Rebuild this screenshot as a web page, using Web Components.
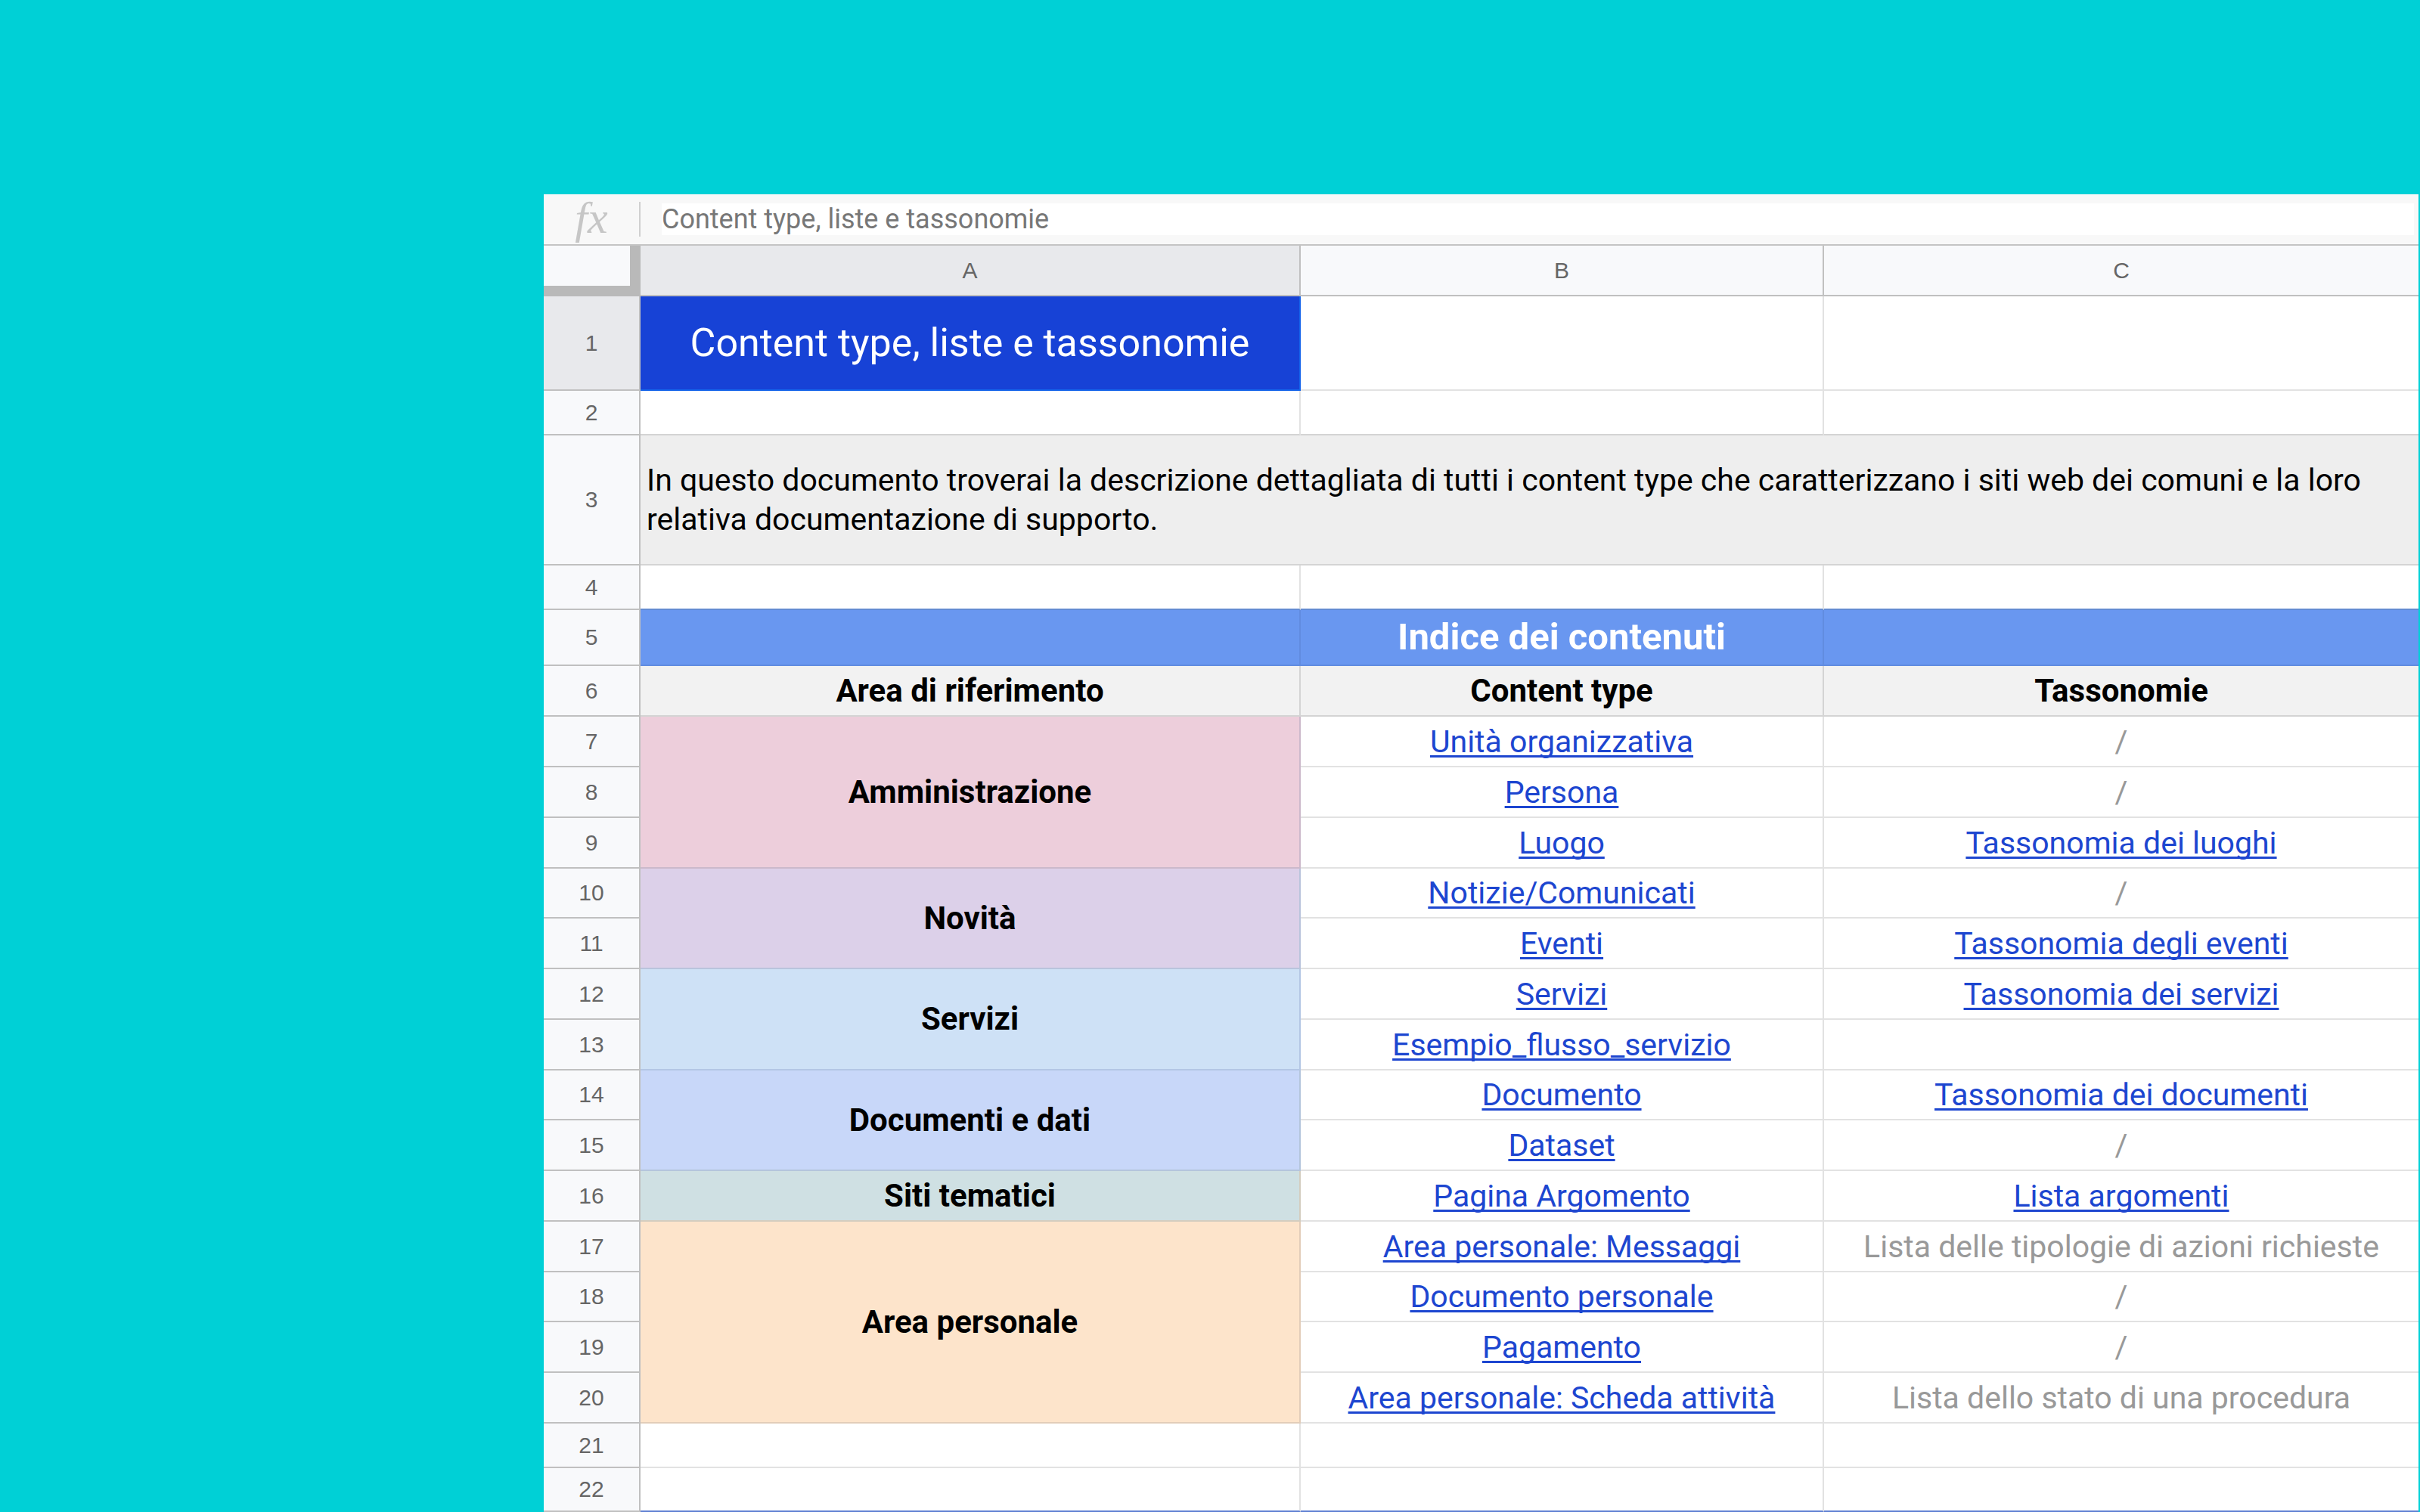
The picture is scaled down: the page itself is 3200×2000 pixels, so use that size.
<!DOCTYPE html>
<html lang="it">
<head>
<meta charset="utf-8">
<title>Content type, liste e tassonomie</title>
<style>
html, body { margin: 0; height: 100%; }
body { background: #00d0d6; overflow: hidden; font-family: Roboto, "Liberation Sans", sans-serif; }
</style>
</head>
<body>
<sheet-window>
  <formula-bar slot="bar" value="Content type, liste e tassonomie"></formula-bar>
  <sheet-grid></sheet-grid>
</sheet-window>

<script>
class SheetWindow extends HTMLElement {
  constructor() {
    super();
    this.attachShadow({ mode: 'open' }).innerHTML = `
      <style>
        :host { display: block; box-sizing: border-box; height: 100vh; padding: 257px 2px 0 719px; overflow: hidden; }
        main { display: flex; flex-direction: column; background: #fff; }
      </style>
      <main><slot name="bar"></slot><slot></slot></main>`;
  }
}

class FormulaBar extends HTMLElement {
  constructor() {
    super();
    this.attachShadow({ mode: 'open' }).innerHTML = `
      <style>
        :host { display: flex; align-items: center; box-sizing: border-box; height: 68px; background: #f8f8f8; border-bottom: 2px solid #c4c4c4; }
        label { box-sizing: border-box; width: 128px; height: 46px; border-right: 2px solid #d0d0d0; text-align: center;
          font: italic 60px/42px "Liberation Serif", serif; color: #c6c6c6; }
        input { flex: 1; box-sizing: border-box; height: 42px; margin: 0 6px 0 28px; padding: 0; border: 0; outline: 0;
          background: #fff; color: #777; font: 36px/42px Roboto, sans-serif; }
      </style>
      <label for="formula">fx</label><input id="formula" type="text">`;
  }
  connectedCallback() {
    this.shadowRoot.querySelector('input').value = this.getAttribute('value');
  }
}

const link = t => `<a href="#">${t}</a>`;
const none = '<i>/</i>';
const ROWS = [
  ['area pink', 3, 'Amministrazione', link('Unità organizzativa'), none],
  [null, 0, '', link('Persona'), none],
  [null, 0, '', link('Luogo'), link('Tassonomia dei luoghi')],
  ['area purple', 2, 'Novità', link('Notizie/Comunicati'), none],
  [null, 0, '', link('Eventi'), link('Tassonomia degli eventi')],
  ['area sky', 2, 'Servizi', link('Servizi'), link('Tassonomia dei servizi')],
  [null, 0, '', link('Esempio_flusso_servizio'), ''],
  ['area blue', 2, 'Documenti e dati', link('Documento'), link('Tassonomia dei documenti')],
  [null, 0, '', link('Dataset'), none],
  ['area teal', 1, 'Siti tematici', link('Pagina Argomento'), link('Lista argomenti')],
  ['area peach', 4, 'Area personale', link('Area personale: Messaggi'), '<i>Lista delle tipologie di azioni richieste</i>'],
  [null, 0, '', link('Documento personale'), none],
  [null, 0, '', link('Pagamento'), none],
  [null, 0, '', link('Area personale: Scheda attività'), '<i>Lista dello stato di una procedura</i>'],
];

class SheetGrid extends HTMLElement {
  constructor() {
    super();
    const body = ROWS.map(([cls, span, area, type, tax], i) => `
      <tr class="item"><th scope="row">${i + 7}</th>${cls ? `<td class="${cls}" rowspan="${span}">${area}</td>` : ''}<td>${type}</td><td>${tax}</td></tr>`).join('');
    this.attachShadow({ mode: 'open' }).innerHTML = `
      <style>
        :host { display: block; --line: #e2e2e2; --head-line: #c0c0c0; }
        table { width: 100%; table-layout: fixed; border-collapse: separate; border-spacing: 0;
          font: 41px/52px Roboto, "Liberation Sans", sans-serif; color: #000; }
        .c0 { width: 128px; } .c1 { width: 873px; } .c2 { width: 692px; }
        th, td { box-sizing: border-box; padding: 0; text-align: center; vertical-align: middle; white-space: nowrap;
          border: 0 solid var(--line); border-width: 0 2px 2px 0; }
        tr > :last-child { border-right-width: 0; }
        th { background: #f8f9fb; border-color: var(--head-line); color: #666; font: 30px/32px "Liberation Sans", sans-serif; }
        th.on { background: #e8e9ec; }
        th.corner { border: solid #b9b9b9; border-width: 0 14px 14px 0; }
        thead tr, tr.sub { height: 67px; }
        tr.title { height: 125px; }
        tr.gap { height: 59px; }
        tr.intro { height: 172px; }
        tr.band { height: 74px; }
        tr.item { height: 67px; }
        tr.item:nth-child(4n) { height: 66px; }
        tr.last { height: 58px; }
        .title .main { background: #1742d6; border-color: #1363ea; color: #fff; font-size: 52px; line-height: 72px; }
        .intro td { background: #eee; border-color: #d4d4d4; text-align: left; padding-left: 8px; }
        .gap.line td { border-bottom-color: #d4d4d4; }
        .gap.top td { border-bottom-color: #638bd2; }
        .band td { background: #6997f0; border-color: #618ce0; color: #fff; font-size: 49px; line-height: 60px; font-weight: bold; }
        .sub td { background: #f2f2f2; border-color: #d4d4d4; font-size: 42px; font-weight: bold; }
        .area { font-size: 42px; font-weight: bold; }
        .pink { background: #edcedb; border-color: #ccb9cb; }
        .purple { background: #dcd0e9; border-color: #b9c4dc; }
        .sky { background: #cee1f6; border-color: #b3c6e4; }
        .blue { background: #c8d7f9; border-color: #b4c5dc; }
        .teal { background: #cfe0e3; border-color: #d4cdbf; }
        .peach { background: #fde4cb; border-color: #e2cdb9; }
        a { color: #1d46d0; text-decoration: underline 3px; text-underline-offset: 4px; text-decoration-skip-ink: none; }
        i { color: #999; font-style: normal; }
        .last td { border-bottom-color: #6080d2; }
        .next td { background: #6997f0; }
      </style>
      <table>
        <colgroup><col class="c0"><col class="c1"><col class="c2"><col></colgroup>
        <thead><tr><th class="corner"></th><th class="on" scope="col">A</th><th scope="col">B</th><th scope="col">C</th></tr></thead>
        <tbody>
          <tr class="title"><th class="on" scope="row">1</th><td class="main">Content type, liste e tassonomie</td><td></td><td></td></tr>
          <tr class="gap line"><th scope="row">2</th><td></td><td></td><td></td></tr>
          <tr class="intro"><th scope="row">3</th><td colspan="3">In questo documento troverai la descrizione dettagliata di tutti i content type che caratterizzano i siti web dei comuni e la loro<br>relativa documentazione di supporto.</td></tr>
          <tr class="gap top"><th scope="row">4</th><td></td><td></td><td></td></tr>
          <tr class="band"><th scope="row">5</th><td></td><td>Indice dei contenuti</td><td></td></tr>
          <tr class="sub"><th scope="row">6</th><td>Area di riferimento</td><td>Content type</td><td>Tassonomie</td></tr>
        </tbody>
        <tbody>${body}</tbody>
        <tbody>
          <tr class="gap"><th scope="row">21</th><td></td><td></td><td></td></tr>
          <tr class="last"><th scope="row">22</th><td></td><td></td><td></td></tr>
          <tr class="band next"><th></th><td></td><td></td><td></td></tr>
        </tbody>
      </table>`;
  }
}

customElements.define('sheet-window', SheetWindow);
customElements.define('formula-bar', FormulaBar);
customElements.define('sheet-grid', SheetGrid);
</script>
</body>
</html>
